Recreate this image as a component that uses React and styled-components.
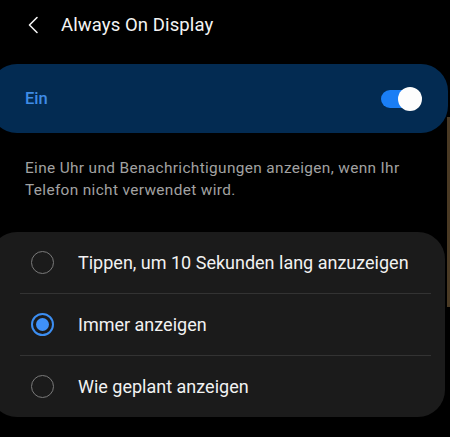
import React, { useState } from "react";
import styled, { createGlobalStyle } from "styled-components";

const GlobalStyle = createGlobalStyle`
  html, body {
    margin: 0;
    padding: 0;
    background: #000;
  }
  body {
    font-family: Roboto, "Noto Sans", "Liberation Sans", sans-serif;
    overflow: hidden;
  }
`;

const Screen = styled.div`
  position: relative;
  width: 450px;
  height: 437px;
  background: #000;
  color: #f2f2f2;
  overflow: hidden;
`;

const Header = styled.div`
  display: flex;
  align-items: center;
  height: 50px;
  padding-left: 27px;
  gap: 22px;
`;

const BackButton = styled.button`
  display: flex;
  align-items: center;
  justify-content: center;
  padding: 0;
  border: 0;
  background: none;
  width: 12px;
  height: 20px;
  cursor: pointer;
`;

const Title = styled.h1`
  margin: 0;
  font-size: 18.5px;
  font-weight: 400;
  color: #f4f4f4;
  letter-spacing: 0.1px;
`;

const MasterCard = styled.div`
  display: flex;
  align-items: center;
  justify-content: space-between;
  margin: 14px 2px 0 -10px;
  height: 69px;
  padding: 0 31px 0 35px;
  border-radius: 27px;
  background: #032b52;
`;

const MasterLabel = styled.span`
  font-size: 16.5px;
  font-weight: 500;
  color: #3f8ce6;
`;

const Track = styled.div`
  position: relative;
  width: 36px;
  height: 18px;
  border-radius: 9px;
  background: ${(p) => (p.$on ? "#1a7ef5" : "#5a5a5a")};
  cursor: pointer;
`;

const Thumb = styled.div`
  position: absolute;
  top: -3px;
  left: ${(p) => (p.$on ? "17px" : "-3px")};
  width: 24px;
  height: 24px;
  border-radius: 50%;
  background: #fdfdfd;
`;

const Description = styled.p`
  margin: 24px 25px 0 25px;
  font-size: 15.4px;
  line-height: 22px;
  letter-spacing: 0.35px;
  color: #a2a2a2;
`;

const OptionsCard = styled.div`
  margin: 31px 5px 0 -10px;
  border-radius: 27px;
  background: #1b1b1b;
  padding: 0 0 0 10px;
`;

const Option = styled.div`
  display: flex;
  align-items: center;
  gap: 24px;
  height: 61px;
  padding-left: 31px;
  cursor: pointer;
`;

const Divider = styled.div`
  height: 1px;
  margin: 0 14px 0 20px;
  background: #333;
`;

const Radio = styled.span`
  display: flex;
  align-items: center;
  justify-content: center;
  box-sizing: border-box;
  width: 23px;
  height: 23px;
  border-radius: 50%;
  border: ${(p) => (p.$checked ? "2px solid #3c8ef2" : "1.5px solid #7a7a7a")};

  &::after {
    content: "";
    display: ${(p) => (p.$checked ? "block" : "none")};
    width: 13px;
    height: 13px;
    border-radius: 50%;
    background: #3f91f8;
  }
`;

const OptionText = styled.span`
  font-size: 18px;
  color: #f2f2f2;
`;

const ScrollHint = styled.div`
  position: absolute;
  right: 0;
  top: 117px;
  width: 3px;
  height: 190px;
  background: #4a3a24;
`;

const options = [
  "Tippen, um 10 Sekunden lang anzuzeigen",
  "Immer anzeigen",
  "Wie geplant anzeigen",
];

export default function App() {
  const [on, setOn] = useState(true);
  const [selected, setSelected] = useState(1);

  return (
    <Screen>
      <GlobalStyle />
      <Header>
        <BackButton aria-label="Zurück">
          <svg width="12" height="18" viewBox="0 0 12 18">
            <path
              d="M10 1.5 L2.5 9 L10 16.5"
              fill="none"
              stroke="#f2f2f2"
              strokeWidth="1.6"
              strokeLinecap="round"
              strokeLinejoin="round"
            />
          </svg>
        </BackButton>
        <Title>Always On Display</Title>
      </Header>

      <MasterCard>
        <MasterLabel>Ein</MasterLabel>
        <Track $on={on} onClick={() => setOn(!on)}>
          <Thumb $on={on} />
        </Track>
      </MasterCard>

      <Description>
        Eine Uhr und Benachrichtigungen anzeigen, wenn Ihr Telefon nicht
        verwendet wird.
      </Description>

      <OptionsCard>
        {options.map((label, i) => (
          <React.Fragment key={label}>
            {i > 0 && <Divider />}
            <Option onClick={() => setSelected(i)}>
              <Radio $checked={selected === i} />
              <OptionText>{label}</OptionText>
            </Option>
          </React.Fragment>
        ))}
      </OptionsCard>

      <ScrollHint />
    </Screen>
  );
}
